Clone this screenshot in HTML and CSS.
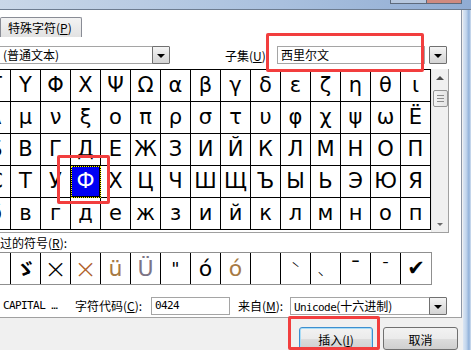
FILE: index.html
```html
<!DOCTYPE html>
<html lang="zh-CN">
<head>
  <meta charset="UTF-8" />
  <title>符号</title>
  <link rel="stylesheet" href="styles.css">
</head>
<body>
  <div class="titlebar">
    <div class="capbtn max"></div>
    <div class="capbtn close"></div>
  </div>
  <div class="window">
    <div class="content">
      <div class="page">
        <div class="tabs">
          <div class="tab">特殊字符(<u>P</u>)</div>
        </div>
        <div class="fontrow">
          <div class="combo font">(普通文本)</div>
          <div class="dd"><span class="tri"></span></div>
          <div class="lbl subset-lbl">子集(<u>U</u>):</div>
          <div class="combo subset">西里尔文</div>
          <div class="dd gap"><span class="tri"></span></div>
        </div>
        <div class="charbox">
          <div class="grid">
            <div class="cell">Τ</div><div class="cell">Υ</div><div class="cell">Φ</div><div class="cell">Χ</div><div class="cell">Ψ</div><div class="cell">Ω</div><div class="cell">α</div><div class="cell">β</div><div class="cell">γ</div><div class="cell">δ</div><div class="cell">ε</div><div class="cell">ζ</div><div class="cell">η</div><div class="cell">θ</div><div class="cell">ι</div>
            <div class="cell">λ</div><div class="cell">μ</div><div class="cell">ν</div><div class="cell">ξ</div><div class="cell">ο</div><div class="cell">π</div><div class="cell">ρ</div><div class="cell">σ</div><div class="cell">τ</div><div class="cell">υ</div><div class="cell">φ</div><div class="cell">χ</div><div class="cell">ψ</div><div class="cell">ω</div><div class="cell">Ё</div>
            <div class="cell">Б</div><div class="cell">В</div><div class="cell">Г</div><div class="cell">Д</div><div class="cell">Е</div><div class="cell">Ж</div><div class="cell">З</div><div class="cell">И</div><div class="cell">Й</div><div class="cell">К</div><div class="cell">Л</div><div class="cell">М</div><div class="cell">Н</div><div class="cell">О</div><div class="cell">П</div>
            <div class="cell">С</div><div class="cell">Т</div><div class="cell">У</div><div class="cell sel">Ф</div><div class="cell">Х</div><div class="cell">Ц</div><div class="cell">Ч</div><div class="cell">Ш</div><div class="cell">Щ</div><div class="cell">Ъ</div><div class="cell">Ы</div><div class="cell">Ь</div><div class="cell">Э</div><div class="cell">Ю</div><div class="cell">Я</div>
            <div class="cell">б</div><div class="cell">в</div><div class="cell">г</div><div class="cell">д</div><div class="cell">е</div><div class="cell">ж</div><div class="cell">з</div><div class="cell">и</div><div class="cell">й</div><div class="cell">к</div><div class="cell">л</div><div class="cell">м</div><div class="cell">н</div><div class="cell">о</div><div class="cell">п</div>
          </div>
          <div class="scrollbar">
            <div class="sb-btn"><span class="up"></span></div>
            <div class="thumb"><span></span><span></span><span></span></div>
            <div class="sb-fill"></div>
            <div class="sb-btn"><span class="down"></span></div>
          </div>
        </div>
        <div class="lbl recent-lbl">过的符号(<u>R</u>):</div>
        <div class="recent">
          <div class="rc">ˊ</div>
          <div class="rc cjk bold">ゞ</div>
          <div class="rc times">×</div>
          <div class="rc times brown">×</div>
          <div class="rc tan">ü</div>
          <div class="rc grey">Ü</div>
          <div class="rc quote">"</div>
          <div class="rc">ó</div>
          <div class="rc tan">ó</div>
          <div class="rc"></div>
          <div class="rc cjk">ˋ</div>
          <div class="rc cjk">、</div>
          <div class="rc">¯</div>
          <div class="rc small">ˉ</div>
          <div class="rc last check">✔</div>
        </div>
        <div class="coderow">
          <div class="charname">CAPITAL …</div>
          <div class="lbl code-lbl">字符代码(<u>C</u>):</div>
          <div class="codebox">0424</div>
          <div class="lbl from-lbl">来自(<u>M</u>):</div>
          <div class="combo from"><span class="mono">Unicode</span>(十六进制)</div>
          <div class="dd"><span class="tri"></span></div>
        </div>
      </div>
      <div class="footer">
        <div class="btn primary">插入(<u>I</u>)</div>
        <div class="btn">取消</div>
      </div>
    </div>
    <div class="frame"></div>
  </div>

  <div class="mark mark-subset"></div>
  <div class="mark mark-sel"></div>
  <div class="mark mark-insert"></div>
</body>
</html>
```

FILE: styles.css
```css
* { box-sizing: border-box; }
body { margin: 0; width: 471px; height: 350px; overflow: hidden; position: relative; background: #f0f0f0; color: #000; font-family: "Noto Sans CJK SC", sans-serif; font-size: 12px; }
u { text-decoration: underline; text-underline-offset: 1px; }

.titlebar { height: 10px; border-bottom: 1px solid #6d7c90; background: linear-gradient(to right, #c9d7e8, #a9c0de 60%, #90acd3); display: flex; justify-content: flex-end; padding-right: 9px; }
.capbtn { height: 4px; border: 1px solid #5d6a7c; border-top: none; }
.capbtn.max { width: 37px; background: #b6c7de; }
.capbtn.close { width: 35px; background: #cf8a80; border-left: none; }

.window { display: flex; height: 340px; }
.content { width: 463px; display: flex; flex-direction: column; }
.frame { flex: 1; background: linear-gradient(to right, #dbe6f4, #c2d5ec 40%, #8fb0d9 75%, #d6e2f1); }

.page { width: 462px; height: 313px; background: #fff; border-right: 1px solid #8d96a5; border-bottom: 1px solid #a0a0a0; }

.tabs { height: 27px; display: flex; align-items: flex-end; }
.tab { width: 82px; height: 20px; padding: 2px 0 0 7px; line-height: 16px; border: 1px solid #898c95; border-bottom: none; border-radius: 2px 2px 0 0; background: linear-gradient(#f3f3f3, #e2e2e2); }

.fontrow { display: flex; align-items: center; height: 18px; margin-top: 9px; }
.combo { height: 18px; border: 1px solid #a5a5a5; line-height: 16px; padding-left: 3px; background: #fff; white-space: nowrap; }
.combo.font { margin-left: -2px; width: 155px; padding-left: 4px; }
.combo.subset { width: 148px; margin-left: 2px; }
.combo.from { width: 140px; }
.dd { width: 18px; height: 18px; border: 1px solid #707070; border-radius: 1px; background: linear-gradient(#f4f4f4, #e3e3e3 50%, #d4d4d4); display: flex; align-items: center; justify-content: center; margin-left: -1px; }
.dd.gap { margin-left: 4px; }
.tri { width: 0; height: 0; border-left: 4px solid transparent; border-right: 4px solid transparent; border-top: 4px solid #000; margin-top: 1px; }
.lbl { white-space: nowrap; }
.subset-lbl { margin-left: 55px; width: 50px; }

.charbox { display: flex; align-items: flex-start; margin-left: -19px; margin-top: 5px; width: 468px; height: 164px; border-right: 1px solid #a0a0a0; border-bottom: 1px solid #a0a0a0; }
.grid { display: grid; grid-template-columns: repeat(15, 30px); border-top: 1px solid #000; }
.cell { height: 32px; border-right: 1px solid #000; border-bottom: 1px solid #000; text-align: center; line-height: 31px; font-family: "DejaVu Sans", sans-serif; font-size: 21px; }
.cell.sel { background: #0000f4; color: #fff; box-shadow: inset 0 0 0 1px #000; outline: 1px dotted #ffff00; outline-offset: -1px; }

.scrollbar { width: 17px; height: 163px; background: #f0f0f0; border-left: 1px solid #e6e6e6; display: flex; flex-direction: column; }
.sb-btn { height: 18px; display: flex; align-items: center; justify-content: center; }
.up { border-left: 4px solid transparent; border-right: 4px solid transparent; border-bottom: 4px solid #4a4a4a; }
.down { border-left: 3px solid transparent; border-right: 3px solid transparent; border-top: 3px solid #6a6a6a; margin-top: 2px; }
.thumb { height: 17px; margin: 3px 0 0 1px; border: 1px solid #959595; border-radius: 2px; background: linear-gradient(to right, #f3f3f3, #e4e4e4); display: flex; flex-direction: column; align-items: center; justify-content: center; gap: 2px; }
.thumb span { width: 7px; height: 1px; background: #8c8c8c; }
.sb-fill { flex: 1; }

.recent-lbl { height: 14px; line-height: 14px; margin-top: 3px; }
.recent { display: flex; margin-left: -20px; margin-top: 2px; width: 452px; height: 33px; border: 1px solid #8f8f8f; }
.rc { width: 30px; height: 31px; border-right: 1px solid #000; text-align: center; line-height: 31px; font-family: "DejaVu Sans", "Noto Sans CJK SC", sans-serif; font-size: 22px; overflow: hidden; }
.rc.last { border-right: none; }
.rc.cjk { font-family: "Noto Sans CJK SC", sans-serif; font-size: 16px; font-weight: 300; }
.rc.cjk.bold { font-size: 20px; font-weight: 700; }
.rc.times { font-size: 27px; font-weight: 300; }
.rc.brown { color: #b0602a; }
.rc.tan { color: #a77a45; }
.rc.grey { color: #7c7486; }
.rc.quote { font-size: 18px; }
.rc.small { font-size: 16px; }
.rc.check { font-size: 21px; }

.coderow { display: flex; align-items: center; height: 18px; margin-top: 12px; line-height: 18px; }
.charname { width: 75px; padding-left: 3px; font-family: "DejaVu Sans Mono", monospace; font-size: 11px; letter-spacing: -0.6px; white-space: nowrap; }
.code-lbl { width: 76px; }
.codebox { width: 79px; height: 18px; border: 1px solid #a5a5a5; padding-left: 3px; line-height: 16px; font-family: "DejaVu Sans Mono", monospace; font-size: 11px; letter-spacing: -0.6px; }
.from-lbl { margin-left: 8px; width: 52px; }
.mono { font-family: "DejaVu Sans Mono", monospace; font-size: 11px; letter-spacing: -0.6px; }

.footer { flex: 1; display: flex; justify-content: flex-end; align-items: flex-start; gap: 10px; padding: 9px 5px 0 0; }
.btn { width: 75px; height: 23px; border: 1px solid #707070; border-radius: 3px; background: linear-gradient(#f2f2f2, #ebebeb 50%, #dddddd 51%, #cfcfcf); text-align: center; line-height: 20px; padding-top: 2px; }
.btn.primary { width: 74px; border-color: #3c8fd0; box-shadow: inset 0 0 0 1px #a9dcf6; }

.mark { position: absolute; border: 3px solid #f23e3e; border-radius: 2px; }
.mark-subset { left: 266px; top: 33px; width: 158px; height: 39px; }
.mark-sel { left: 57px; top: 155px; width: 53px; height: 49px; }
.mark-insert { left: 288px; top: 316px; width: 92px; height: 34px; }
```
